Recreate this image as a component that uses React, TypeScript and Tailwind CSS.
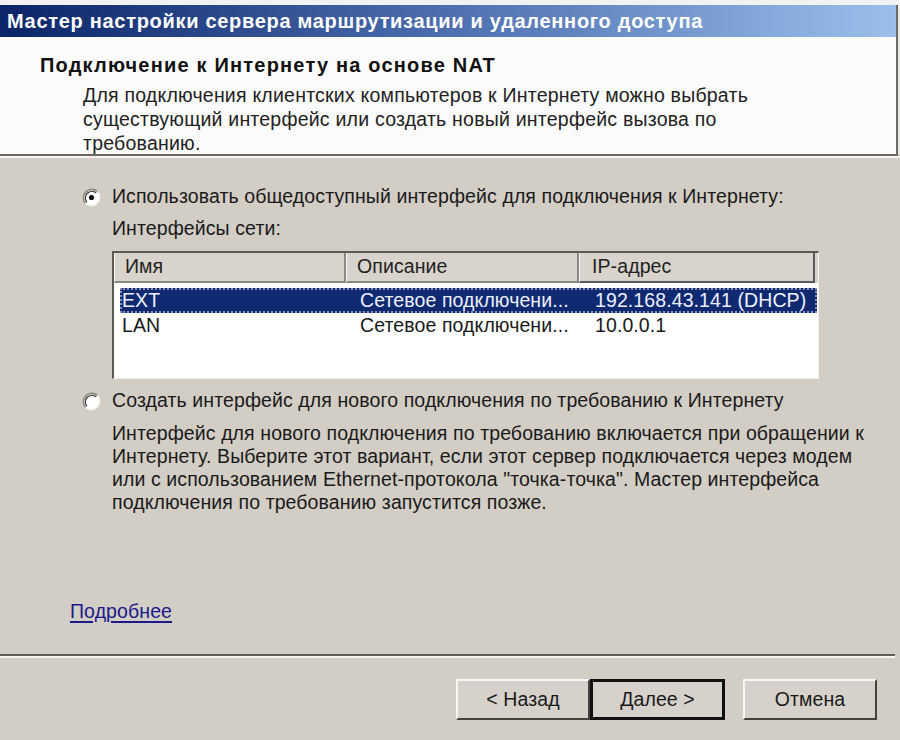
import React from "react";

function Radio({ checked }: { checked?: boolean }) {
  return (
    <svg width="19" height="19" viewBox="0 0 19 19" className="shrink-0">
      <circle cx="9.5" cy="9.5" r="8.5" fill="#ffffff" />
      <path d="M3.5 15.5 A8.5 8.5 0 0 1 15.5 3.5" stroke="#8a8680" strokeWidth="1.6" fill="none" />
      <path d="M4.8 14.2 A6.7 6.7 0 0 1 14.2 4.8" stroke="#3c3a36" strokeWidth="1.4" fill="none" />
      <path d="M15.5 3.5 A8.5 8.5 0 0 1 3.5 15.5" stroke="#f4f2ee" strokeWidth="1.6" fill="none" />
      {checked && <circle cx="9.5" cy="9.5" r="2.6" fill="#111" />}
    </svg>
  );
}

export default function App() {
  const font = { fontFamily: '"Liberation Sans", Arial, sans-serif' };
  return (
    <div
      className="w-[900px] h-[740px] bg-[#d2cdc5] flex flex-col overflow-hidden text-[19.5px] tracking-[0.1px] text-[#1a1a1a]"
      style={font}
    >
      <div className="h-[5px] bg-[#f2f2f2]" />
      <div className="flex">
        <div className="flex-1 flex flex-col">
          {/* title bar */}
          <div className="h-[32px] bg-gradient-to-r from-[#0b2468] via-[#4d6fb0] to-[#9cc0ea] flex items-center pl-[7px]">
            <span className="text-white font-bold text-[20px] tracking-[0.7px] whitespace-nowrap">
              Мастер настройки сервера маршрутизации и удаленного доступа
            </span>
          </div>
          {/* header */}
          <div className="h-[117px] bg-[#fbfbfb] pl-[40px] pt-[15px]">
            <div className="font-bold text-[20px] tracking-[1.2px] text-[#111] leading-[26px] whitespace-nowrap">
              Подключение к Интернету на основе NAT
            </div>
            <div className="pl-[43px] leading-[24px] text-[#222] mt-[5px] tracking-[0.22px] whitespace-nowrap">
              <div>Для подключения клиентских компьютеров к Интернету можно выбрать</div>
              <div>существующий интерфейс или создать новый интерфейс вызова по</div>
              <div>требованию.</div>
            </div>
          </div>
        </div>
        <div className="w-[2px] bg-[#6e6b66]" />
        <div className="w-[2px] bg-[#e8e6e2]" />
      </div>
      <div className="h-[2px] bg-[#6b6864] mr-[2px]" />
      <div className="h-[2px] bg-[#f6f5f2]" />

      {/* body */}
      <div className="flex-1 flex flex-col pl-[82px] pt-[27px] whitespace-nowrap">
        <div className="flex items-center gap-[11px] h-[24px]">
          <Radio checked />
          <span>Использовать общедоступный интерфейс для подключения к Интернету:</span>
        </div>
        <div className="pl-[30px] mt-[7px] h-[24px] leading-[24px]">Интерфейсы сети:</div>

        {/* list */}
        <div className="ml-[30px] mt-[11px] w-[707px] h-[128px] border-t-2 border-l-2 border-[#5b5954] border-r border-b border-r-[#f3f2ef] border-b-[#f3f2ef] bg-white flex flex-col">
          <div className="h-[30px] flex bg-[#d8d4cd] text-[#222]">
            <div className="w-[232px] border-r-2 border-b-2 border-[#8b8781] border-l border-l-[#f7f6f3] flex items-end pl-[10px]">Имя</div>
            <div className="w-[233px] border-r-2 border-b-2 border-[#8b8781] border-l border-l-[#f7f6f3] flex items-end pl-[10px]">Описание</div>
            <div className="w-[236px] border-r-2 border-b-2 border-[#5b5954] border-l border-l-[#f7f6f3] flex items-end pl-[12px]">IP-адрес</div>
          </div>
          <div className="mt-[5px] ml-[6px] w-[697px] h-[25px] bg-[#102a72] text-[#eef0ff] flex items-center outline-dotted outline-2 outline-[#8a90b8] -outline-offset-2">
            <div className="w-[240px] pl-[2px]">EXT</div>
            <div className="w-[235px]">Сетевое подключени...</div>
            <div>192.168.43.141 (DHCP)</div>
          </div>
          <div className="ml-[6px] h-[25px] flex items-center">
            <div className="w-[240px] pl-[2px]">LAN</div>
            <div className="w-[235px]">Сетевое подключени...</div>
            <div>10.0.0.1</div>
          </div>
        </div>

        <div className="flex items-center gap-[11px] h-[24px] mt-[10px]">
          <Radio />
          <span>Создать интерфейс для нового подключения по требованию к Интернету</span>
        </div>
        <div className="pl-[30px] mt-[9px] leading-[23px]">
          <div>Интерфейс для нового подключения по требованию включается при обращении к</div>
          <div>Интернету. Выберите этот вариант, если этот сервер подключается через модем</div>
          <div>или с использованием Ethernet-протокола "точка-точка". Мастер интерфейса</div>
          <div>подключения по требованию запустится позже.</div>
        </div>

        <div className="flex-1" />
        <div className="ml-[-12px] mb-[28px]">
          <span className="text-[#1a1a8a] underline underline-offset-[3px] decoration-[2px]">Подробнее </span>
        </div>
      </div>

      {/* separator */}
      <div className="h-[2px] bg-[#5e5c58] mr-[5px]" />
      <div className="h-[2px] bg-[#f6f5f2] mr-[5px]" />

      {/* buttons */}
      <div className="h-[82px] flex items-start pt-[21px] pl-[456px]">
        <button className="w-[134px] h-[41px] bg-[#d6d2cb] border-t-2 border-l-2 border-[#f8f7f4] border-r-2 border-b-2 border-r-[#44423e] border-b-[#44423e] text-[19.5px] flex items-center justify-center">
          &lt; Назад
        </button>
        <button className="w-[135px] h-[41px] bg-[#d6d2cb] border-[3px] border-[#111] text-[19.5px] flex items-center justify-center">
          Далее &gt;
        </button>
        <button className="ml-[18px] w-[134px] h-[41px] bg-[#d6d2cb] border-t-2 border-l-2 border-[#f8f7f4] border-r-2 border-b-2 border-r-[#44423e] border-b-[#44423e] text-[19.5px] flex items-center justify-center">
          Отмена
        </button>
      </div>
    </div>
  );
}
